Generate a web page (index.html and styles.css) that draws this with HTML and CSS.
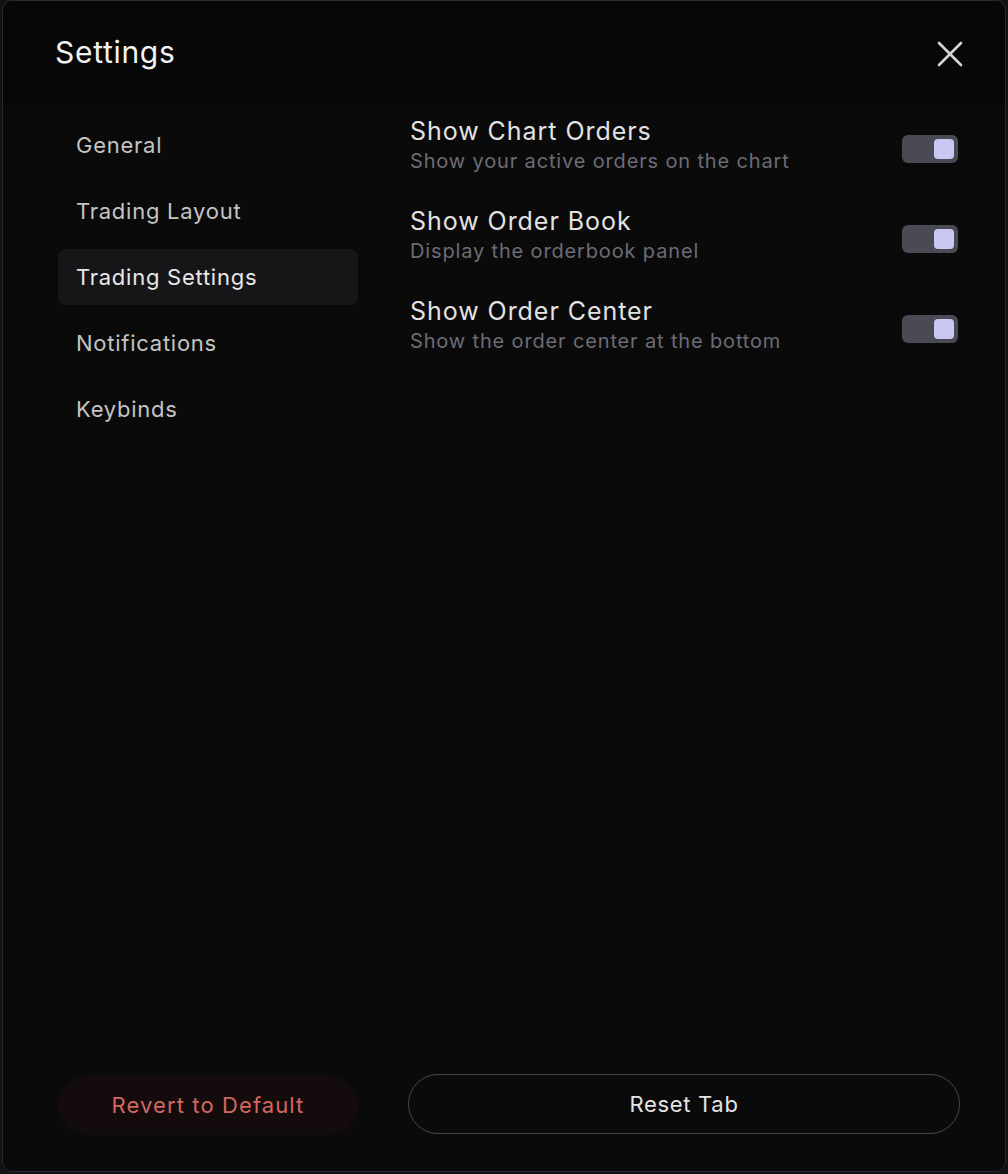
FILE: index.html
```html
<!DOCTYPE html>
<html lang="en">
<head>
    <meta charset="UTF-8">
    <meta name="viewport" content="width=device-width, initial-scale=1.0">
    <title>Settings</title>
    <link rel="stylesheet" href="styles.css">
</head>
<body>
    <div id="modal">
        <div class="header">
            <h1>Settings</h1>
            <button class="close" aria-label="Close">
                <svg width="26" height="26" viewBox="0 0 26 26" fill="none" stroke="#d4d4d4" stroke-width="2.6" stroke-linecap="round">
                    <path d="M2 2 L24 24 M24 2 L2 24"/>
                </svg>
            </button>
        </div>
        <div class="main">
            <ul class="nav">
                <li>General</li>
                <li>Trading Layout</li>
                <li class="active">Trading Settings</li>
                <li>Notifications</li>
                <li>Keybinds</li>
            </ul>
            <div class="options">
                <div class="option">
                    <div class="text">
                        <div class="title">Show Chart Orders</div>
                        <div class="desc">Show your active orders on the chart</div>
                    </div>
                    <div class="toggle on"><span class="knob"></span></div>
                </div>
                <div class="option">
                    <div class="text">
                        <div class="title">Show Order Book</div>
                        <div class="desc">Display the orderbook panel</div>
                    </div>
                    <div class="toggle on"><span class="knob"></span></div>
                </div>
                <div class="option">
                    <div class="text">
                        <div class="title">Show Order Center</div>
                        <div class="desc">Show the order center at the bottom</div>
                    </div>
                    <div class="toggle on"><span class="knob"></span></div>
                </div>
            </div>
        </div>
        <div class="footer">
            <button class="revert">Revert to Default</button>
            <button class="reset">Reset Tab</button>
        </div>
    </div>
</body>
</html>
```
FILE: styles.css
```css
body {
    font-family: Inter, "Liberation Sans", sans-serif;
    margin: 0;
    padding: 0;
    background-color: #121214;
    height: 1174px;
    overflow: hidden;
}
#modal {
    box-sizing: border-box;
    width: 1004px;
    height: 1172px;
    margin-left: 2px;
    border: 1px solid #2a2a31;
    border-radius: 10px;
    background-color: #0a0a0a;
    display: flex;
    flex-direction: column;
    color: #e4e4e4;
}
.header {
    height: 102px;
    display: flex;
    align-items: center;
    justify-content: space-between;
    padding: 4px 42px 0 52px;
    box-sizing: border-box;
    background-color: #070707;
    border-radius: 10px 10px 0 0;
}
h1 {
    margin: 0 0 4px 0;
    font-size: 30px;
    font-weight: 400;
    letter-spacing: 0.7px;
    color: #f2f2f2;
}
.close {
    background: none;
    border: none;
    padding: 0;
    width: 26px;
    height: 26px;
    cursor: pointer;
}
.main {
    flex: 1;
    display: flex;
    gap: 50px;
    padding: 12px 44px 0 55px;
}
.nav {
    list-style: none;
    margin: 2px 0 0 0;
    padding: 0;
    width: 300px;
    display: flex;
    flex-direction: column;
    gap: 10px;
}
.nav li {
    height: 56px;
    line-height: 56px;
    padding-left: 18px;
    font-size: 22px;
    letter-spacing: 0.75px;
    color: #c4c4c4;
    border-radius: 8px;
    cursor: pointer;
}
.nav li.active {
    background-color: #161618;
    color: #e8e8e8;
}
.options {
    flex: 1;
    display: flex;
    flex-direction: column;
    gap: 14px;
    margin-top: -8px;
    padding-left: 2px;
}
.option {
    display: flex;
    align-items: center;
    justify-content: space-between;
    height: 76px;
}
.title {
    font-size: 25px;
    line-height: 32px;
    letter-spacing: 0.95px;
    color: #e2e2e2;
}
.desc {
    font-size: 20px;
    line-height: 28px;
    letter-spacing: 0.85px;
    color: #6c6c76;
}
.toggle {
    box-sizing: border-box;
    width: 56px;
    height: 28px;
    border-radius: 6px;
    background-color: #4a4a55;
    padding: 4px;
    display: flex;
    justify-content: flex-end;
    margin: 8px 3px 0 0;
}
.knob {
    width: 20px;
    height: 20px;
    border-radius: 4px;
    background-color: #c8c8f2;
}
.footer {
    display: flex;
    gap: 50px;
    padding: 0 45px 36px 55px;
    align-items: center;
}
.footer button {
    height: 60px;
    border-radius: 30px;
    font-family: Inter, "Liberation Sans", sans-serif;
    font-size: 22px;
    letter-spacing: 0.7px;
    cursor: pointer;
}
.footer .revert {
    width: 300px;
    background-color: #140c0c;
    border: none;
    color: #d3675f;
    margin-top: 2px;
    letter-spacing: 1.1px;
}
.footer .reset {
    flex: 1;
    background-color: transparent;
    border: 1.5px solid #46464c;
    color: #e4e4e4;
}
```
